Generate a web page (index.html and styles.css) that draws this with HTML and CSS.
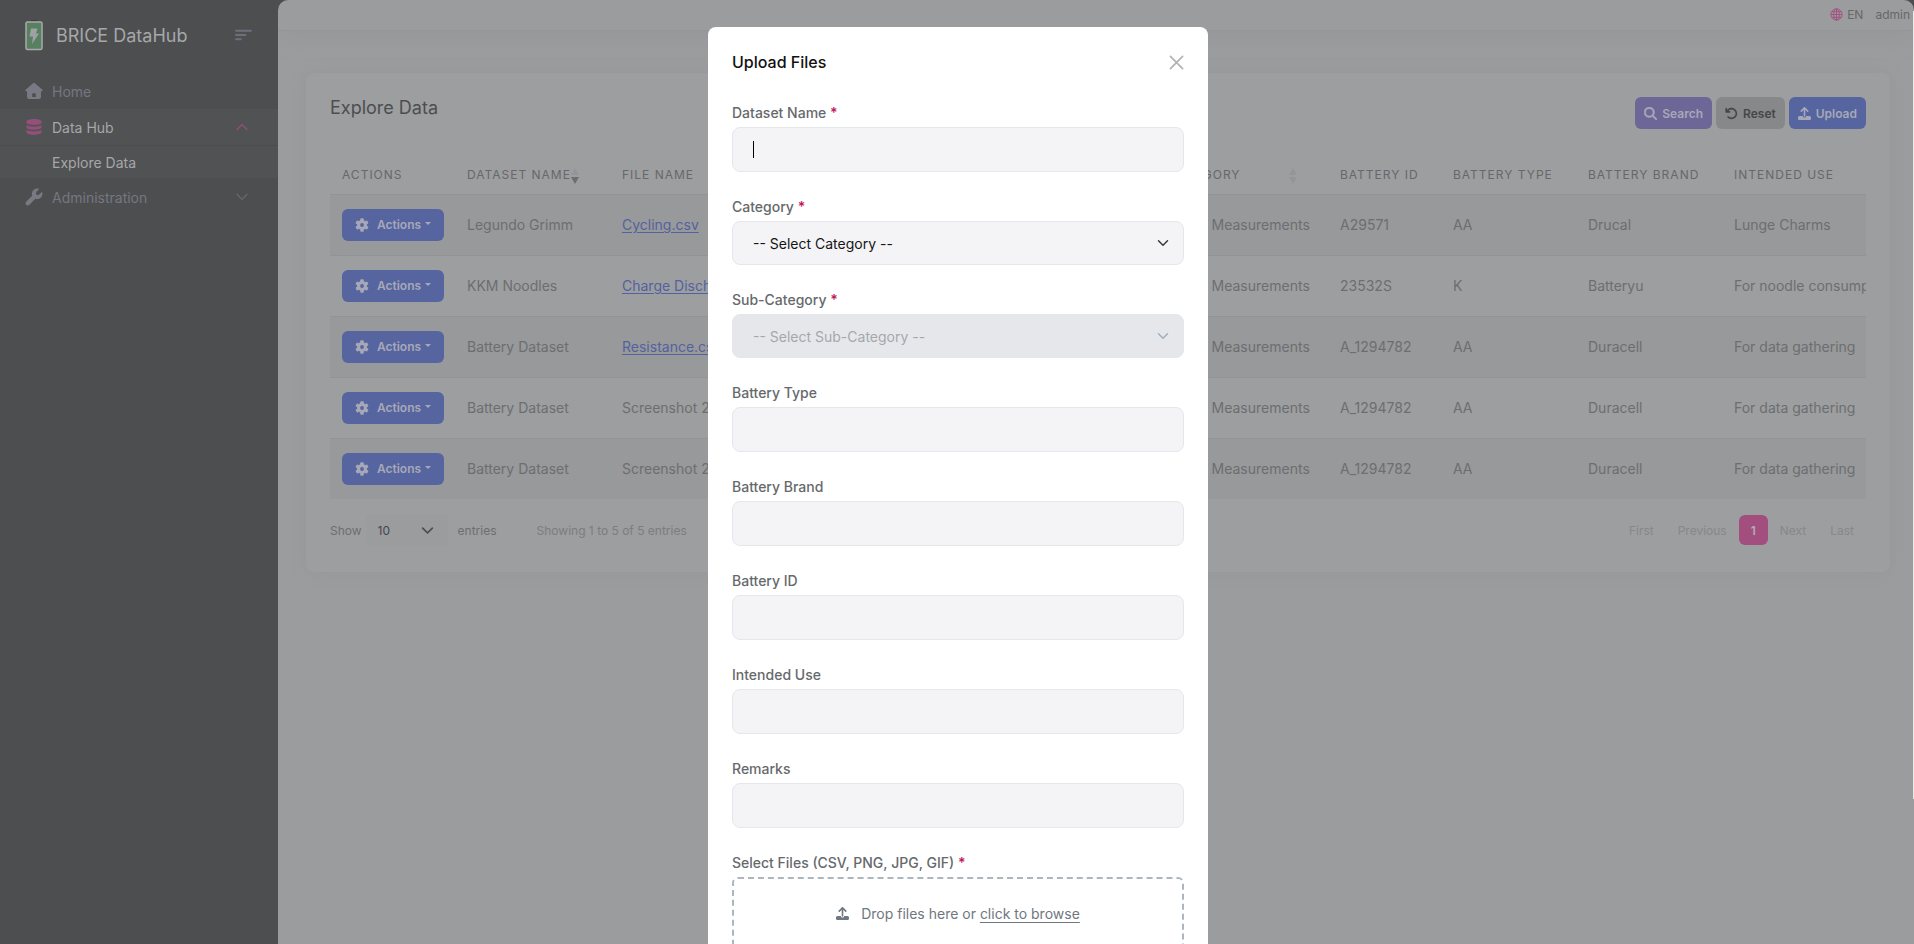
FILE: index.html
```html
<!DOCTYPE html>
<html lang="en">
<head>
<meta charset="utf-8">
<title>BRICE DataHub</title>
<link rel="stylesheet" href="styles.css">
</head>
<body>
<svg class="sprite" aria-hidden="true">
  <symbol id="i-gear" viewBox="0 0 20 20">
    <g fill="currentColor">
      <rect x="7.500" y="0.500" width="5" height="19" rx="1.400"/>
      <rect x="7.500" y="0.500" width="5" height="19" rx="1.400" transform="rotate(60 10 10)"/>
      <rect x="7.500" y="0.500" width="5" height="19" rx="1.400" transform="rotate(120 10 10)"/>
    </g>
    <circle cx="10" cy="10" r="5" fill="none" stroke="currentColor" stroke-width="4.200"/>
    <circle cx="10" cy="10" r="2.700" fill="#56659f"/>
  </symbol>
  <symbol id="i-upload" viewBox="0 0 512 512"><path fill="currentColor" d="M288 109.300V352c0 17.700-14.300 32-32 32s-32-14.300-32-32V109.300l-73.400 73.400c-12.500 12.500-32.800 12.500-45.300 0s-12.500-32.800 0-45.300l128-128c12.500-12.500 32.800-12.500 45.300 0l128 128c12.500 12.500 12.500 32.800 0 45.300s-32.800 12.500-45.300 0L288 109.300zM64 352H192c0 35.300 28.700 64 64 64s64-28.700 64-64H448c35.300 0 64 28.700 64 64v32c0 35.300-28.700 64-64 64H64c-35.300 0-64-28.700-64-64V416c0-35.300 28.700-64 64-64z"/></symbol>
  <symbol id="i-down" viewBox="0 0 16 16"><path d="M2 5l6 6 6-6" fill="none" stroke="currentColor" stroke-width="2" stroke-linecap="round" stroke-linejoin="round"/></symbol>
  <symbol id="i-sort" viewBox="0 0 8 16"><path class="sort-up" d="M4 0l4 7H0z"/><path class="sort-down" d="M4 16L0 9h8z"/></symbol>
</svg>

<div class="app">
  <aside class="sidebar">
    <div class="brand">
      <svg class="brand-logo" viewBox="0 0 18 31" aria-hidden="true">
        <path d="M6 1h6" stroke="#3d3f40" stroke-width="2"/>
        <rect x="1" y="2" width="16" height="27.500" rx="1.500" fill="#56805f" stroke="#a9abab" stroke-width="1.500"/>
        <path d="M6 8.500h6.500l-1.500 5h3L7 24l1-7.500H4.500z" fill="#a0a1a2"/>
      </svg>
      <span class="brand-name">BRICE DataHub</span>
      <button class="menu-toggle" type="button" aria-label="Toggle menu">
        <svg viewBox="0 0 16 11"><path d="M1 1.500h14M1 5.500h9M1 9.500h4.500" stroke="currentColor" stroke-width="1.800" stroke-linecap="round"/></svg>
      </button>
    </div>
    <nav class="nav">
      <a class="nav-item" href="#">
        <svg class="nav-icon" viewBox="0 0 18 18"><path fill="currentColor" fill-rule="evenodd" d="M7.800 1.400a1.800 1.800 0 0 1 2.400 0l7 6.100c.8.700.4 1.800-.5 1.800H16V15a2 2 0 0 1-2 2H4a2 2 0 0 1-2-2V9.300h-.7c-.9 0-1.300-1.100-.5-1.800zM9 11a1.800 1.800 0 0 0-1.800 1.800V15h3.600v-2.200A1.800 1.800 0 0 0 9 11z"/></svg>
        <span>Home</span>
      </a>
      <a class="nav-item is-open" href="#">
        <svg class="nav-icon pink" viewBox="0 0 18 18"><path fill="currentColor" d="M1.500 3.600C1.500 2.100 4.800 1 9 1s7.500 1.100 7.500 2.600v1C16.500 6.100 13.200 7 9 7s-7.500-.9-7.500-2.400zM1.500 7C3 8.200 6 8.700 9 8.700S15 8.200 16.500 7v2.300c0 1.500-3.300 2.500-7.500 2.500s-7.500-1-7.500-2.500zM1.500 11.800c1.500 1.200 4.500 1.700 7.500 1.700s6-.5 7.500-1.700v2.500c0 1.500-3.300 2.500-7.500 2.500s-7.500-1-7.500-2.500z"/></svg>
        <span>Data Hub</span>
        <svg class="nav-arrow pink" viewBox="0 0 12 8"><path d="M.7 7L6 1.500 11.300 7" fill="none" stroke="currentColor" stroke-width="1.200"/></svg>
      </a>
      <a class="nav-item nav-sub" href="#"><span>Explore Data</span></a>
      <a class="nav-item" href="#">
        <svg class="nav-icon" viewBox="-16 -16 544 544"><path fill="currentColor" d="M352 320c88.400 0 160-71.600 160-160c0-15.300-2.200-30.100-6.200-44.200c-3.100-10.800-16.400-13.200-24.300-5.300l-76.800 76.800c-3 3-7.100 4.700-11.300 4.700H336c-8.800 0-16-7.200-16-16V118.600c0-4.200 1.700-8.300 4.700-11.300l76.800-76.800c7.900-7.900 5.400-21.200-5.300-24.300C382.100 2.200 367.300 0 352 0C263.600 0 192 71.600 192 160c0 19.100 3.400 37.500 9.500 54.500L19.900 396.100C7.200 408.800 0 426.100 0 444.100C0 481.600 30.400 512 67.900 512c18 0 35.300-7.200 48-19.900L297.500 310.500c17 6.200 35.400 9.500 54.500 9.500z"/></svg>
        <span>Administration</span>
        <svg class="nav-arrow" viewBox="0 0 12 8"><path d="M.7 1L6 6.500 11.300 1" fill="none" stroke="currentColor" stroke-width="1.200"/></svg>
      </a>
    </nav>
  </aside>

  <div class="main">
    <header class="topbar">
      <a class="lang" href="#">
        <svg viewBox="0 0 14 14" aria-hidden="true"><g fill="none" stroke="currentColor" stroke-width="1"><circle cx="7" cy="7" r="6"/><ellipse cx="7" cy="7" rx="3" ry="6"/><path d="M7 1v12M1 7h12M1.800 4h10.400M1.800 10h10.400"/></g></svg>
        EN
      </a>
      <a class="user" href="#">admin</a>
    </header>

    <main class="card">
      <div class="card-head">
        <h1>Explore Data</h1>
        <div class="card-actions">
          <button class="btn btn-purple" type="button"><svg viewBox="0 0 512 512"><path fill="currentColor" d="M416 208c0 45.900-14.900 88.300-40 122.700L502.600 457.400c12.500 12.500 12.500 32.800 0 45.300s-32.800 12.500-45.300 0L330.700 376c-34.400 25.200-76.800 40-122.700 40C93.100 416 0 322.900 0 208S93.100 0 208 0S416 93.100 416 208zM208 352a144 144 0 1 0 0-288 144 144 0 1 0 0 288z" stroke="currentColor" stroke-width="16"/></svg>Search</button>
          <button class="btn btn-grey" type="button"><svg viewBox="0 0 512 512"><path fill="currentColor" d="M125.700 160H176c17.700 0 32 14.300 32 32s-14.300 32-32 32H48c-17.700 0-32-14.300-32-32V64c0-17.700 14.300-32 32-32s32 14.300 32 32v51.200L97.600 97.600c87.500-87.500 229.300-87.500 316.800 0s87.500 229.300 0 316.800s-229.300 87.500-316.800 0c-12.500-12.500-12.500-32.800 0-45.300s32.800-12.500 45.300 0c62.500 62.500 163.800 62.500 226.300 0s62.500-163.800 0-226.300s-163.800-62.500-226.300 0L125.700 160z"/></svg>Reset</button>
          <button class="btn btn-blue" type="button"><svg><use href="#i-upload"/></svg>Upload</button>
        </div>
      </div>

      <div class="table-wrap">
        <table class="data">
          <colgroup><col class="c-act"><col class="c-name"><col class="c-file"><col class="c-cat"><col class="c-sub"><col class="c-id"><col class="c-type"><col class="c-brand"><col class="c-use"></colgroup>
          <thead>
            <tr><th>Actions</th><th>Dataset Name<svg class="sort is-desc"><use href="#i-sort"/></svg></th><th>File Name</th><th></th><th class="sub-head"><span>Sub-Category</span><svg class="sort"><use href="#i-sort"/></svg></th><th>Battery ID</th><th>Battery Type</th><th>Battery Brand</th><th>Intended Use</th></tr>
          </thead>
          <tbody>
            <tr><td><button class="btn btn-action" type="button"><svg><use href="#i-gear"/></svg>Actions<i class="caret"></i></button></td><td>Legundo Grimm</td><td><a href="#">Cycling.csv</a></td><td></td><td>Impedance Measurements</td><td>A29571</td><td>AA</td><td>Drucal</td><td>Lunge Charms</td></tr>
            <tr><td><button class="btn btn-action" type="button"><svg><use href="#i-gear"/></svg>Actions<i class="caret"></i></button></td><td>KKM Noodles</td><td><a href="#">Charge Discharge.csv</a></td><td></td><td>Impedance Measurements</td><td>23532S</td><td>K</td><td>Batteryu</td><td>For noodle consumption</td></tr>
            <tr><td><button class="btn btn-action" type="button"><svg><use href="#i-gear"/></svg>Actions<i class="caret"></i></button></td><td>Battery Dataset</td><td><a href="#">Resistance.csv</a></td><td></td><td>Impedance Measurements</td><td>A_1294782</td><td>AA</td><td>Duracell</td><td>For data gathering</td></tr>
            <tr><td><button class="btn btn-action" type="button"><svg><use href="#i-gear"/></svg>Actions<i class="caret"></i></button></td><td>Battery Dataset</td><td>Screenshot 2</td><td></td><td>Impedance Measurements</td><td>A_1294782</td><td>AA</td><td>Duracell</td><td>For data gathering</td></tr>
            <tr><td><button class="btn btn-action" type="button"><svg><use href="#i-gear"/></svg>Actions<i class="caret"></i></button></td><td>Battery Dataset</td><td>Screenshot 2</td><td></td><td>Impedance Measurements</td><td>A_1294782</td><td>AA</td><td>Duracell</td><td>For data gathering</td></tr>
          </tbody>
        </table>
      </div>

      <div class="card-foot">
        <label class="length" for="len">Show
          <span class="length-select"><select id="len"><option>10</option></select><svg class="chev"><use href="#i-down"/></svg></span>
          <span>entries</span>
        </label>
        <span class="info">Showing 1 to 5 of 5 entries</span>
        <nav class="pages">
          <button type="button" disabled>First</button>
          <button type="button" disabled>Previous</button>
          <button type="button" class="current">1</button>
          <button type="button" disabled>Next</button>
          <button type="button" disabled>Last</button>
        </nav>
      </div>
    </main>
  </div>
</div>

<div class="overlay">
  <form class="modal" role="dialog" aria-labelledby="dlg-title">
    <div class="modal-head">
      <h2 id="dlg-title">Upload Files</h2>
      <button class="close" type="button" aria-label="Close"><svg viewBox="0 0 16 16"><path d="M1.500 1.500l13 13M14.500 1.500l-13 13" stroke="currentColor" stroke-width="1.800" stroke-linecap="round"/></svg></button>
    </div>
    <div class="field"><label for="f-name">Dataset Name <b>*</b></label><div class="control is-focus"><input id="f-name" type="text"></div></div>
    <div class="field"><label for="f-cat">Category <b>*</b></label><div class="control"><select id="f-cat"><option>-- Select Category --</option></select><svg class="chev"><use href="#i-down"/></svg></div></div>
    <div class="field"><label for="f-sub">Sub-Category <b>*</b></label><div class="control is-disabled"><select id="f-sub" disabled><option>-- Select Sub-Category --</option></select><svg class="chev"><use href="#i-down"/></svg></div></div>
    <div class="field"><label for="f-type">Battery Type</label><div class="control"><input id="f-type" type="text"></div></div>
    <div class="field"><label for="f-brand">Battery Brand</label><div class="control"><input id="f-brand" type="text"></div></div>
    <div class="field"><label for="f-id">Battery ID</label><div class="control"><input id="f-id" type="text"></div></div>
    <div class="field"><label for="f-use">Intended Use</label><div class="control"><input id="f-use" type="text"></div></div>
    <div class="field"><label for="f-rem">Remarks</label><div class="control"><input id="f-rem" type="text"></div></div>
    <div class="field"><label for="f-files">Select Files (CSV, PNG, JPG, GIF) <b>*</b></label>
      <div class="drop"><svg><use href="#i-upload"/></svg><span>Drop files here or <a href="#">click to browse</a></span><input id="f-files" type="file" hidden></div>
    </div>
  </form>
  <div class="scroll-thumb"></div>
</div>
</body>
</html>
```

FILE: styles.css
```css
* { box-sizing: border-box; }
body {
  margin: 0;
  background: #4d4e50;
  font-family: Inter, "Liberation Sans", sans-serif;
  font-size: 14px;
  line-height: 21px;
  color: #6c6e71;
  overflow: hidden;
}
button, input, select { font: inherit; color: inherit; }
button { border: 0; background: none; padding: 0; }
svg { display: block; flex: none; }
.sprite { position: absolute; width: 0; height: 0; }

.app { display: flex; min-height: 100vh; }

/* Sidebar */
.sidebar { flex: 0 0 278px; background: #4d4e50; color: #747780; }
.brand { display: flex; align-items: center; height: 73px; padding: 0 26px 2px 25px; }
.brand-logo { width: 18px; height: 31px; }
.brand-name { margin-left: 13px; font-size: 18px; color: #a6a7a8; flex: 1; white-space: nowrap; }
.menu-toggle { color: #6d707c; margin-bottom: 2px; }
.menu-toggle svg { width: 17px; height: 12px; fill: none; }
.nav-item { display: flex; align-items: center; height: 36px; padding: 0 30px 0 25px; color: inherit; text-decoration: none; }
.nav-icon { width: 18px; height: 18px; margin-right: 9px; color: #777a83; }
.nav-arrow { width: 12px; height: 8px; margin-left: auto; color: #66696e; }
.nav-item .pink { color: #94507a; }
.is-open { background: #515254; color: #a6a7a8; border-bottom: 1px solid #4b4c4e; height: 37px; }
.nav-sub { background: #515254; color: #a6a7a8; padding-left: 52px; height: 32px; margin-bottom: 1px; }

/* Page */
.main { flex: 1; min-width: 0; background: #9b9c9d; border-radius: 10px 10px 0 0; overflow: clip; }
.topbar { display: flex; justify-content: flex-end; align-items: center; gap: 12px; height: 31px; padding: 0 4px 2px; border-bottom: 1px solid #959698; font-size: 12px; box-shadow: 0 8px 20px #97989c; }
.topbar a { display: flex; align-items: center; gap: 4px; color: #66686c; text-decoration: none; }
.lang svg { width: 13px; height: 13px; color: #a24f80; }
.card { margin: 42px 24px 0 28px; padding: 24px; background: #9d9e9f; border-radius: 8px; box-shadow: 0 0 14px #96979c; }
.card-head { display: flex; justify-content: space-between; align-items: flex-start; }
h1 { margin: 0; font-size: 18px; font-weight: 400; line-height: 22px; color: #4c4e50; }
.card-actions { display: flex; gap: 4px; }
.btn { display: flex; align-items: center; justify-content: center; gap: 5px; height: 32px; padding: 0 9px; border-radius: 6px; font-size: 12px; font-weight: 600; color: #a6a8b8; white-space: nowrap; }
.btn svg { width: 13px; height: 13px; }
.btn-purple { background: #6d6797; }
.btn-grey { background: #868889; color: #454648; }
.btn-blue, .btn-action { background: #56659f; }
.btn-action { width: 102px; gap: 8px; font-size: 12px; }
.btn-action svg { width: 14px; height: 14px; }
.caret { margin: 0 0 3px -4px; border: 3px solid transparent; border-top-color: currentColor; border-bottom: 0; }

.table-wrap { margin-top: 26px; overflow: hidden; }
.data { width: 1592px; table-layout: fixed; border-collapse: collapse; }
.c-act { width: 125px; }
.c-name { width: 155px; }
.c-file { width: 340px; }
.c-cat { width: 172px; }
.c-sub { width: 206px; }
.c-id { width: 113px; }
.c-type { width: 135px; }
.c-brand { width: 146px; }
.c-use { width: 200px; }
.data th, .data td { padding: 0 12px; text-align: left; font-weight: 400; white-space: nowrap; }
.data th { height: 39px; font-size: 12px; letter-spacing: 1px; text-transform: uppercase; color: #66686b; }
.data td { height: 61px; border-top: 1px solid #929395; }
.data tbody tr:nth-child(odd) { background: #98999a; }
.data tbody a, .data tbody a:visited { color: #53629f; text-underline-offset: 2px; }
.sort { display: inline-block; width: 8px; height: 16px; vertical-align: -5px; fill: #939597; }
.sort.is-desc { --down: #6c6e71; }
.sort-down { fill: var(--down, #939597); }
.sub-head .sort { margin-left: 49px; }

.card-foot { display: flex; align-items: center; margin-top: 15px; padding-bottom: 2px; font-size: 12px; }
.length { display: flex; align-items: center; gap: 4px; }
.length-select { position: relative; margin-right: 6px; }
.length-select select { appearance: none; width: 82px; height: 32px; padding: 0 12px; border: 0; border-radius: 6px; background: #9b9c9d; color: #45474a; }
.length-select .chev { position: absolute; right: 14px; top: 10px; width: 13px; height: 13px; color: #4c4e50; }
.info { margin-left: 40px; color: #7b7d80; }
.pages { display: flex; margin-left: auto; }
.pages button { height: 30px; padding: 0 12px; border-radius: 6px; color: #86888a; }
.pages .current { width: 29px; padding: 0; background: #a24f80; color: #b4adb1; font-weight: 600; }

/* Upload dialog */
.overlay { position: fixed; inset: 0; overflow: hidden; padding-left: 2px; }
.modal { width: 500px; margin: 27px auto 0; padding: 24px; background: #fff; border-radius: 8px; color: #6c6e71; }
.modal-head { display: flex; justify-content: space-between; align-items: center; height: 23px; margin-bottom: 28px; }
h2 { margin: 0; font-size: 16px; font-weight: 500; color: #111; }
.close { color: #b3b3b3; }
.close svg { width: 15px; height: 15px; }
.field { margin-bottom: 24px; }
.field label { display: block; margin-bottom: 4px; font-weight: 500; color: #66696c; }
.field b { color: #c2185b; font-weight: 600; }
.control { position: relative; }
.control input, .control select { display: block; width: 100%; height: 45px; padding: 0 20px; border: 1px solid #e6e7ec; border-radius: 8px; background: #f4f4f7; color: #151515; outline: 0; }
.control select { appearance: none; height: 44px; opacity: 1; }
.is-focus::after { content: ""; position: absolute; left: 21px; top: 14px; width: 1px; height: 17px; background: #000; }
.control .chev { position: absolute; right: 15px; top: 15px; width: 12px; height: 14px; color: #343a40; }
.is-disabled select { background: #e6e7eb; color: #a5a8ab; border-color: #e6e7eb; }
.is-disabled .chev { color: #9fb0bf; }
.drop { display: flex; justify-content: center; gap: 12px; height: 130px; padding-top: 24px; border: 2px dashed #adb5bd; border-radius: 6px; color: #6f7780; }
.drop svg { width: 13px; height: 13px; margin-top: 4px; }
.drop a, .drop a:visited { color: #6f7780; text-underline-offset: 3px; }
.scroll-thumb { position: absolute; right: 0; top: 11px; width: 1px; height: 788px; background: #e8e8e8; }
```
